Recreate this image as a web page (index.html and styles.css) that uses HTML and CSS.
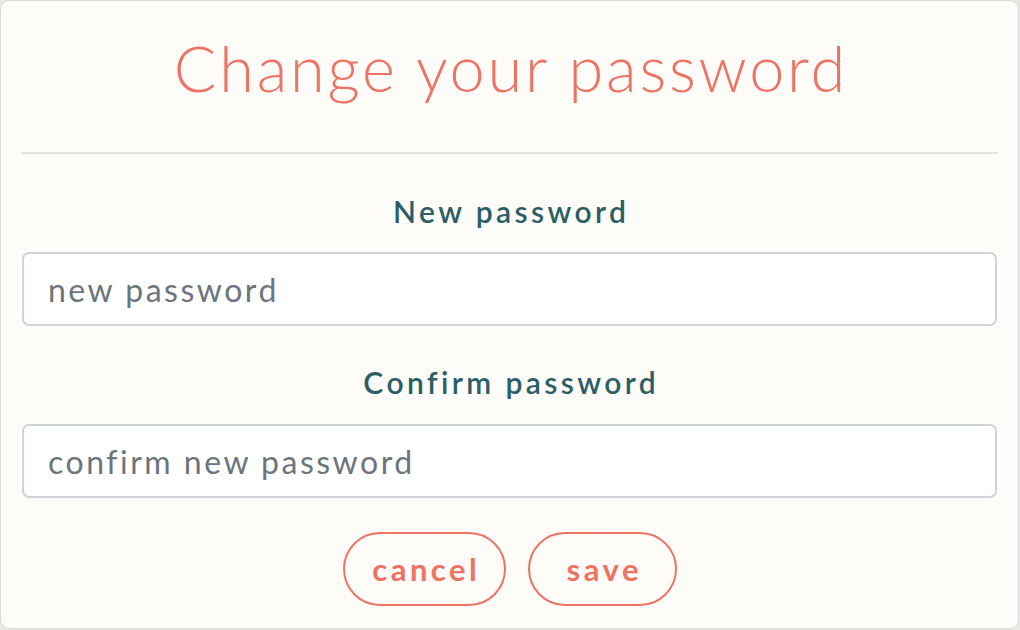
FILE: index.html
```html
<!DOCTYPE html>
<html>
<head>
<meta charset="utf-8">
<link rel="stylesheet" href="styles.css">
</head>
<body>
<div class="modal">
  <div class="modal-header">
    <h1 class="title">Change your password</h1>
  </div>
  <form class="modal-body">
    <label class="field-label first" for="np">New password</label>
    <input class="field-input" id="np" type="password" placeholder="new password">
    <label class="field-label" for="cp">Confirm password</label>
    <input class="field-input" id="cp" type="password" placeholder="confirm new password">
    <div class="actions">
      <button type="button" class="btn btn-cancel">cancel</button>
      <button type="button" class="btn btn-save">save</button>
    </div>
  </form>
</div>
</body>
</html>
```

FILE: styles.css
```css
* { box-sizing: border-box; }
html, body { margin: 0; padding: 0; }
body {
  width: 1020px;
  height: 630px;
  background: #e6ece0;
  font-family: "Lato", "Open Sans", sans-serif;
  overflow: hidden;
}
.modal {
  width: 1019px;
  height: 629px;
  background: #fdfcf8;
  border: 1.5px solid #d9d9d9;
  border-radius: 9px;
  padding: 0 20px;
  display: flex;
  flex-direction: column;
}
.modal-header {
  flex: 0 0 auto;
  height: 153px;
  border-bottom: 2px solid #e3e3df;
  display: flex;
  justify-content: center;
  padding-top: 27px;
}
.title {
  margin: 0;
  font-weight: 300;
  font-size: 63px;
  line-height: 80px;
  color: #ee7363;
  letter-spacing: 2.8px;
  padding-left: 2.8px;
}
.modal-body {
  flex: 0 0 auto;
  display: flex;
  flex-direction: column;
  padding: 0 1px;
}
.field-label {
  flex: 0 0 auto;
  display: block;
  text-align: center;
  font-size: 30px;
  line-height: 40px;
  color: #2b5e66;
  font-weight: 600;
  letter-spacing: 3.4px;
  padding-left: 3.4px;
  margin: 36px 0 22px;
}
.field-label.first { margin: 37px 0 21px; }
.field-input {
  flex: 0 0 74px;
  height: 74px;
  width: 100%;
  border: 2px solid #ced4da;
  border-radius: 7px;
  background: #ffffff;
  padding: 0 24px;
  font-family: "Lato", "Open Sans", sans-serif;
  font-size: 32px;
  color: #495057;
  letter-spacing: 2.5px;
  outline: none;
}
.field-input::placeholder { color: #6c757d; }
.actions {
  flex: 0 0 auto;
  display: flex;
  justify-content: center;
  gap: 22px;
  margin-top: 34px;
}
.btn {
  height: 74px;
  border: 2px solid #ee7363;
  border-radius: 37px;
  background: transparent;
  color: #ee7363;
  font-family: "Lato", "Open Sans", sans-serif;
  font-size: 31px;
  font-weight: 700;
  letter-spacing: 3.5px;
  padding: 0 0 0 3.5px;
}
.btn-cancel { width: 163px; margin-left: 1px; }
.btn-save { width: 149px; }
```
